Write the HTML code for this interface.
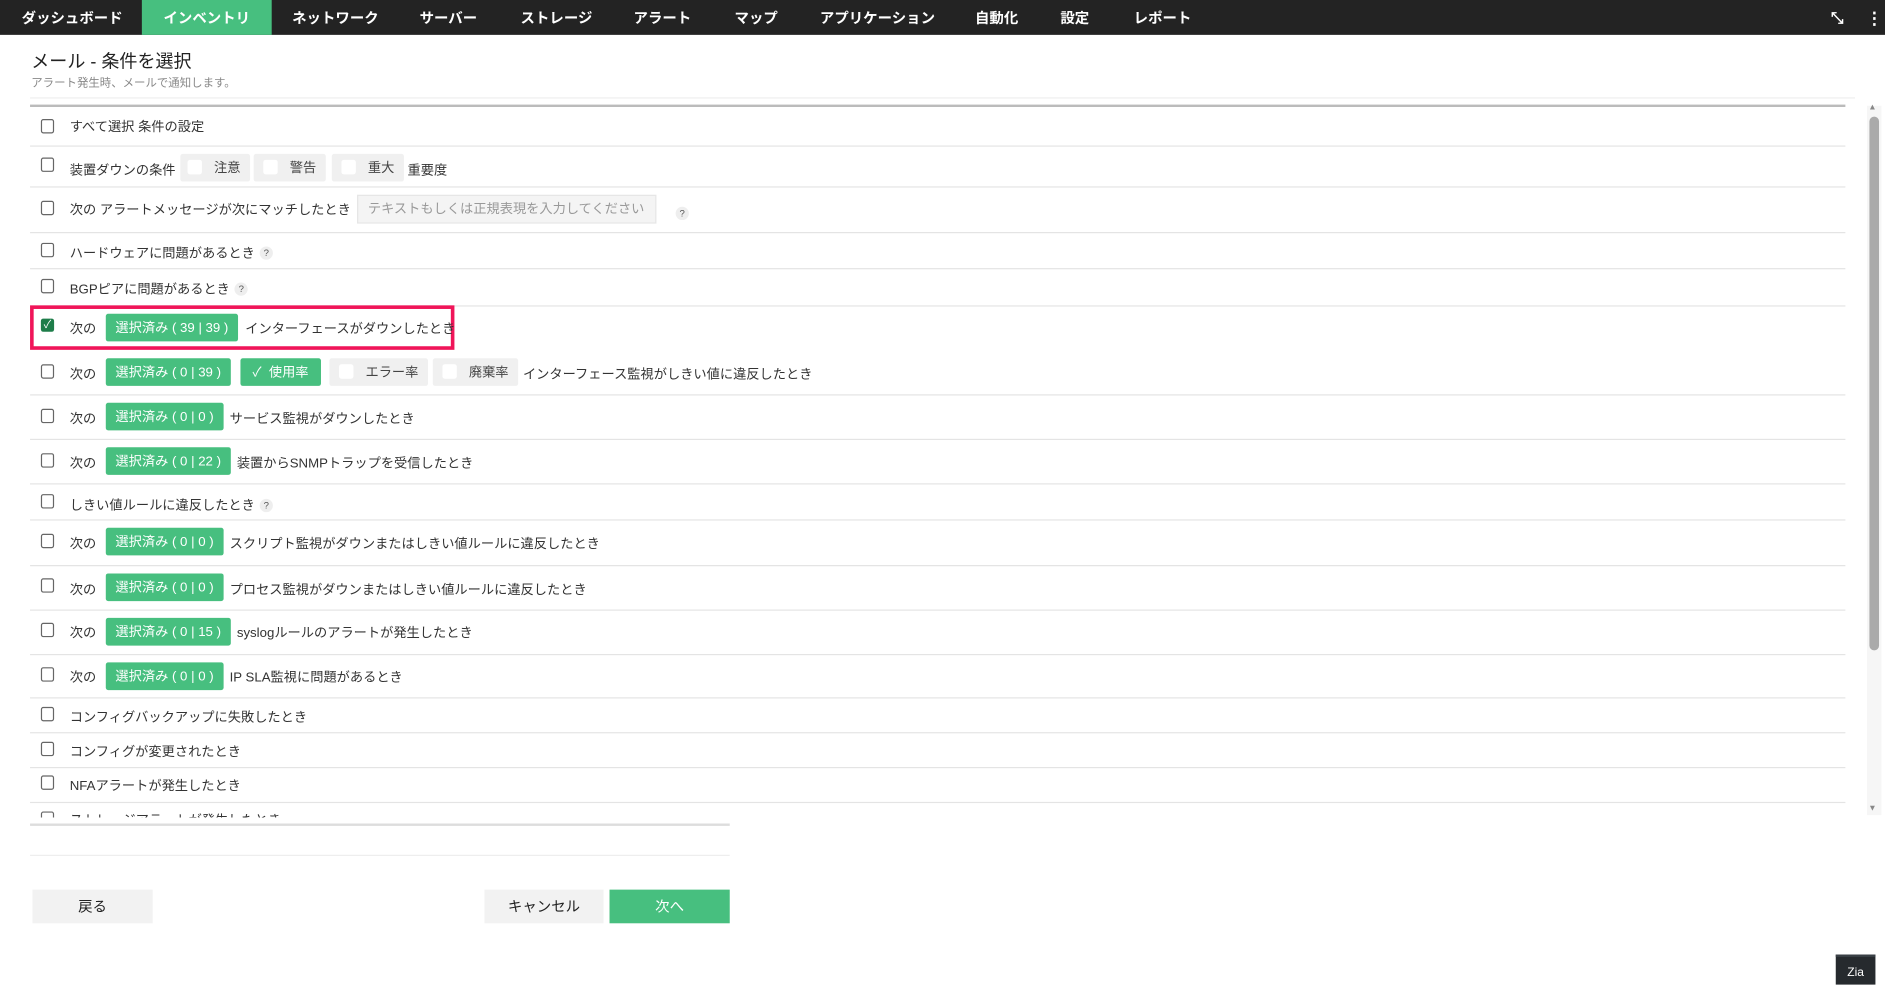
<!DOCTYPE html>
<html><head><meta charset="utf-8"><style>
html,body{margin:0;padding:0;width:1885px;height:985px;overflow:hidden;background:#fff}
#w{position:absolute;left:0;top:0;width:1568px;height:819px;transform:scale(1.2022);transform-origin:0 0;font-family:"Liberation Sans","Noto Sans CJK JP",sans-serif;color:#333}
.nav{position:absolute;left:0;top:0;width:1568px;height:29px;background:#232323}
.nav span{position:absolute;top:0;height:29px;line-height:30px;color:#fff;font-size:12px;font-weight:bold}
.nav .act{background:#47bf7f;padding:0 18px}
.t{position:absolute;white-space:nowrap}
.cb{position:absolute;left:34px;width:9px;height:10px;border:1px solid #666;border-radius:2px;background:#fff}
.row{position:absolute;left:25px;width:1510px;height:1px;background:#e4e4e4}
.b{position:absolute;height:23px;line-height:24px;background:#47bf7f;color:#fff;font-size:11px;border-radius:2px;padding:0 8px;white-space:nowrap}
.g{position:absolute;height:23px;line-height:24px;background:#f0f0f0;color:#444;font-size:11px;border-radius:2px;white-space:nowrap}
.g i{display:inline-block;width:12px;height:12px;background:#fff;border-radius:2px;vertical-align:-2px;margin:0 10px 0 8px}
.q{display:inline-block;width:11px;height:11px;border-radius:50%;background:#eee;color:#555;font-size:8px;line-height:11px;text-align:center;vertical-align:1px;margin-left:4px}
.f{font-size:11px;color:#333}
</style></head><body><div id="w">
<div class="nav">
<span style="left:18px">ダッシュボード</span>
<span class="act" style="left:118px">インベントリ</span>
<span style="left:243px">ネットワーク</span>
<span style="left:349px">サーバー</span>
<span style="left:433px">ストレージ</span>
<span style="left:527px">アラート</span>
<span style="left:611px">マップ</span>
<span style="left:682px">アプリケーション</span>
<span style="left:811px">自動化</span>
<span style="left:882px">設定</span>
<span style="left:943px">レポート</span>
<span style="left:1523px;font-size:13px">⤡</span>
<span style="left:1552px;font-size:14px">⋮</span>
</div>
<div class="t" style="left:26px;top:40px;font-size:15px;color:#222">メール - 条件を選択</div>
<div class="t" style="left:26px;top:61px;font-size:9.5px;color:#888">アラート発生時、メールで通知します。</div>
<div style="position:absolute;left:25px;top:81px;width:1518px;height:1px;background:#eee"></div>
<div style="position:absolute;left:25px;top:87px;width:1510px;height:1.5px;background:#bbb"></div>

<div style="position:absolute;left:0;top:89px;width:1545px;height:591px;overflow:hidden">
<div style="position:absolute;left:0;top:-89px;width:1545px;height:800px">
<div class="cb" style="top:99px"></div><div class="t f" style="left:58px;top:97px">すべて選択 条件の設定</div><div class="row" style="top:121px"></div>
<div class="cb" style="top:131px"></div><div class="t f" style="left:58px;top:133px">装置ダウンの条件</div>
<div class="g" style="left:150px;top:128px;padding-right:8px"><i style="margin-left:6px"></i>注意</div>
<div class="g" style="left:211px;top:128px;padding-right:8px"><i></i>警告</div>
<div class="g" style="left:276px;top:128px;padding-right:8px"><i></i>重大</div>
<div class="t f" style="left:339px;top:133px">重要度</div><div class="row" style="top:155px"></div>
<div class="cb" style="top:167px"></div><div class="t f" style="left:58px;top:166px">次の アラートメッセージが次にマッチしたとき</div>
<div style="position:absolute;left:297px;top:162px;width:249px;height:24px;background:#f4f4f4;border:1px solid #e6e6e6;box-sizing:border-box;font-size:11px;color:#999;line-height:22px;padding-left:8px">テキストもしくは正規表現を入力してください</div>
<div class="t" style="left:558px;top:168px"><span class="q">?</span></div><div class="row" style="top:193px"></div>
<div class="cb" style="top:202px"></div><div class="t f" style="left:58px;top:202px">ハードウェアに問題があるとき<span class="q">?</span></div><div class="row" style="top:223px"></div>
<div class="cb" style="top:232px"></div><div class="t f" style="left:58px;top:232px">BGPピアに問題があるとき<span class="q">?</span></div><div class="row" style="top:254px"></div>
<div style="position:absolute;left:25px;top:254px;width:353px;height:37px;border:3px solid #f01559;box-sizing:border-box"></div>
<div style="position:absolute;left:34px;top:265px;width:11px;height:11px;background:#1e7d4a;border-radius:2px;color:#fff;font-size:9px;line-height:11px;text-align:center">✓</div>
<div class="t f" style="left:58px;top:265px">次の</div><div class="b" style="left:88px;top:261px">選択済み ( 39 | 39 )</div><div class="t f" style="left:204px;top:265px">インターフェースがダウンしたとき</div>
<div class="cb" style="top:303px"></div><div class="t f" style="left:58px;top:303px">次の</div><div class="b" style="left:88px;top:298px">選択済み ( 0 | 39 )</div>
<div class="b" style="left:200px;top:298px;padding:0 10px">✓&nbsp; 使用率</div>
<div class="g" style="left:274px;top:298px;padding-right:8px"><i></i>エラー率</div>
<div class="g" style="left:360px;top:298px;padding-right:8px"><i></i>廃棄率</div>
<div class="t f" style="left:435px;top:303px">インターフェース監視がしきい値に違反したとき</div><div class="row" style="top:328px"></div>
<div class="cb" style="top:340px"></div><div class="t f" style="left:58px;top:340px">次の</div><div class="b" style="left:88px;top:335px">選択済み ( 0 | 0 )</div><div class="t f" style="left:191px;top:340px">サービス監視がダウンしたとき</div><div class="row" style="top:365px"></div>
<div class="cb" style="top:377px"></div><div class="t f" style="left:58px;top:377px">次の</div><div class="b" style="left:88px;top:372px">選択済み ( 0 | 22 )</div><div class="t f" style="left:197px;top:377px">装置からSNMPトラップを受信したとき</div><div class="row" style="top:402px"></div>
<div class="cb" style="top:411px"></div><div class="t f" style="left:58px;top:412px">しきい値ルールに違反したとき<span class="q">?</span></div><div class="row" style="top:432px"></div>
<div class="cb" style="top:444px"></div><div class="t f" style="left:58px;top:444px">次の</div><div class="b" style="left:88px;top:439px">選択済み ( 0 | 0 )</div><div class="t f" style="left:191px;top:444px">スクリプト監視がダウンまたはしきい値ルールに違反したとき</div><div class="row" style="top:470px"></div>
<div class="cb" style="top:481px"></div><div class="t f" style="left:58px;top:482px">次の</div><div class="b" style="left:88px;top:477px">選択済み ( 0 | 0 )</div><div class="t f" style="left:191px;top:482px">プロセス監視がダウンまたはしきい値ルールに違反したとき</div><div class="row" style="top:507px"></div>
<div class="cb" style="top:518px"></div><div class="t f" style="left:58px;top:518px">次の</div><div class="b" style="left:88px;top:514px">選択済み ( 0 | 15 )</div><div class="t f" style="left:197px;top:518px">syslogルールのアラートが発生したとき</div><div class="row" style="top:544px"></div>
<div class="cb" style="top:555px"></div><div class="t f" style="left:58px;top:555px">次の</div><div class="b" style="left:88px;top:551px">選択済み ( 0 | 0 )</div><div class="t f" style="left:191px;top:555px">IP SLA監視に問題があるとき</div><div class="row" style="top:580px"></div>
<div class="cb" style="top:588px"></div><div class="t f" style="left:58px;top:588px">コンフィグバックアップに失敗したとき</div><div class="row" style="top:609px"></div>
<div class="cb" style="top:617px"></div><div class="t f" style="left:58px;top:617px">コンフィグが変更されたとき</div><div class="row" style="top:638px"></div>
<div class="cb" style="top:645px"></div><div class="t f" style="left:58px;top:645px">NFAアラートが発生したとき</div><div class="row" style="top:667px"></div>
<div class="cb" style="top:675px"></div><div class="t f" style="left:58px;top:674px">ストレージアラートが発生したとき</div>
</div></div>

<div style="position:absolute;left:1553px;top:88px;width:12px;height:590px;background:#f6f6f6"></div>
<div style="position:absolute;left:1555px;top:97px;width:8px;height:444px;background:#aaa;border-radius:4px"></div>
<div class="t" style="left:1554px;top:86px;font-size:7px;color:#888">▲</div>
<div class="t" style="left:1554px;top:669px;font-size:7px;color:#888">▼</div>

<div style="position:absolute;left:25px;top:685px;width:582px;height:2px;background:#ddd"></div>
<div style="position:absolute;left:25px;top:711px;width:582px;height:1px;background:#eee"></div>
<div style="position:absolute;left:27px;top:740px;width:100px;height:28px;background:#f2f2f2;text-align:center;line-height:29px;font-size:12px;color:#222">戻る</div>
<div style="position:absolute;left:403px;top:740px;width:99px;height:28px;background:#f2f2f2;text-align:center;line-height:29px;font-size:12px;color:#222">キャンセル</div>
<div style="position:absolute;left:507px;top:740px;width:100px;height:28px;background:#47bf7f;text-align:center;line-height:29px;font-size:12px;color:#fff">次へ</div>
<div style="position:absolute;left:1527px;top:794px;width:33px;height:25px;background:#262a2e;color:#fff;font-size:10px;text-align:center;line-height:27px;border-top:2px solid #3a4046;box-sizing:border-box">Zia</div>
</div></body></html>
